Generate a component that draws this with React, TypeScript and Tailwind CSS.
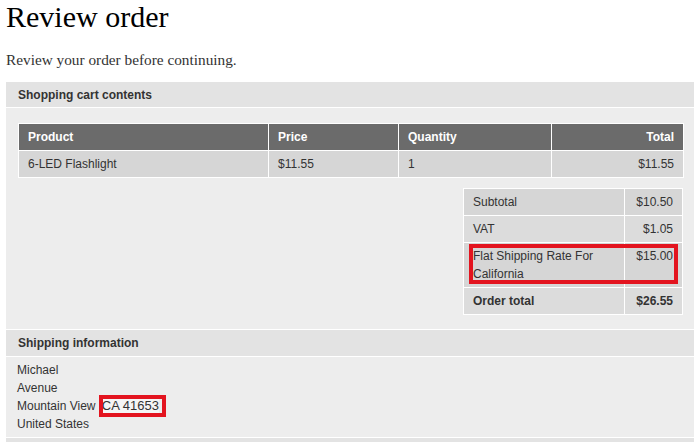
import React from "react";

const sans = { fontFamily: '"Liberation Sans", Arial, sans-serif' };

export default function App() {
  return (
    <div className="w-[699px] h-[442px] overflow-hidden bg-white relative">
      <h1
        className="ml-[6px] text-[30px] leading-[34px] text-black font-normal"
        style={{ fontFamily: '"Liberation Serif", "Times New Roman", serif' }}
      >
        Review order
      </h1>
      <p
        className="ml-[6px] mt-[16px] text-[15.3px] leading-[20px] text-[#333]"
        style={{ fontFamily: '"Liberation Serif", "Times New Roman", serif' }}
      >
        Review your order before continuing.
      </p>

      <div className="ml-[6px] w-[688px] mt-[12px] text-[12px] text-[#333]" style={sans}>
        {/* Shopping cart */}
        <div className="h-[26px] bg-[#e3e3e3] border-b border-white pl-[12px] flex items-center font-bold">
          Shopping cart contents
        </div>
        <div className="bg-[#ededed] pt-[15px] pl-[12px] pr-[11px] pb-[14px] border-b border-white">
          <table className="w-[665px] border-collapse table-fixed leading-[18px]">
            <colgroup>
              <col className="w-[250px]" />
              <col className="w-[130px]" />
              <col className="w-[153px]" />
              <col className="w-[132px]" />
            </colgroup>
            <thead>
              <tr className="bg-[#6b6b6b] text-white font-bold">
                <th className="border border-white text-left font-bold px-[9px] py-[4px]">Product</th>
                <th className="border border-white text-left font-bold px-[9px] py-[4px]">Price</th>
                <th className="border border-white text-left font-bold px-[9px] py-[4px]">Quantity</th>
                <th className="border border-white text-right font-bold px-[9px] py-[4px]">Total</th>
              </tr>
            </thead>
            <tbody>
              <tr className="bg-[#d6d6d6]">
                <td className="border border-white px-[9px] py-[4px]">6-LED Flashlight</td>
                <td className="border border-white px-[9px] py-[4px]">$11.55</td>
                <td className="border border-white px-[9px] py-[4px]">1</td>
                <td className="border border-white px-[9px] py-[4px] text-right">$11.55</td>
              </tr>
            </tbody>
          </table>

          <div className="flex justify-end mt-[10px]">
            <table className="w-[219px] border-collapse table-fixed leading-[18px] relative">
              <colgroup>
                <col className="w-[161px]" />
                <col className="w-[58px]" />
              </colgroup>
              <tbody>
                <tr className="bg-[#d6d6d6]">
                  <td className="border border-white px-[9px] py-[4px]">Subtotal</td>
                  <td className="border border-white px-[9px] py-[4px] text-right">$10.50</td>
                </tr>
                <tr className="bg-[#dcdcdc]">
                  <td className="border border-white px-[9px] py-[4px]">VAT</td>
                  <td className="border border-white px-[9px] py-[4px] text-right">$1.05</td>
                </tr>
                <tr className="bg-[#d6d6d6]">
                  <td className="border border-white px-[9px] py-[4px] align-top">
                    Flat Shipping Rate For California
                  </td>
                  <td className="border border-white px-[9px] py-[4px] text-right align-top">$15.00</td>
                </tr>
                <tr className="bg-[#dcdcdc] font-bold">
                  <td className="border border-white px-[9px] py-[4px]">Order total</td>
                  <td className="border border-white px-[9px] py-[4px] text-right">$26.55</td>
                </tr>
              </tbody>
            </table>
          </div>
        </div>

        {/* Shipping info */}
        <div className="h-[27px] bg-[#e3e3e3] border-b border-white pl-[12px] flex items-center font-bold">
          Shipping information
        </div>
        <div className="bg-[#ededed] pl-[11px] pt-[4px] pb-[4px] leading-[18px] border-b border-white">
          <div>Michael</div>
          <div>Avenue</div>
          <div>
            Mountain View{" "}
            <span className="bg-[#f5f5f5] ml-[3px] text-[13px]">CA 41653</span>
          </div>
          <div>United States</div>
        </div>
        <div className="h-[26px] bg-[#e3e3e3]" />
      </div>

      {/* annotation boxes */}
      <div className="absolute left-[469px] top-[244px] w-[209px] h-[40px] border-[4px] border-[#e3141f]" />
      <div className="absolute left-[99px] top-[395px] w-[67px] h-[22px] border-[4px] border-[#e3141f]" />
    </div>
  );
}
